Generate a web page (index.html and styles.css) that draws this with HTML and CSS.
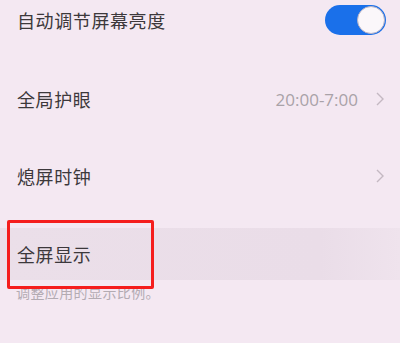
FILE: index.html
```html
<!DOCTYPE html>
<html lang="zh">
<head>
<meta charset="utf-8">
<link rel="stylesheet" href="styles.css">
</head>
<body>
<div class="page">
  <div class="row row-first">
    <span class="title">自动调节屏幕亮度</span>
    <span class="toggle"><span class="knob"></span></span>
  </div>
  <div class="row row-second">
    <span class="title">全局护眼</span>
    <span class="right">
      <span class="value">20:00-7:00</span>
      <svg class="chev" width="10" height="16" viewBox="0 0 10 16"><polyline points="2,2 8,8 2,14" fill="none" stroke="#c4b8c2" stroke-width="1.4"/></svg>
    </span>
  </div>
  <div class="row row-third">
    <span class="title">熄屏时钟</span>
    <span class="right">
      <svg class="chev" width="10" height="16" viewBox="0 0 10 16"><polyline points="2,2 8,8 2,14" fill="none" stroke="#c4b8c2" stroke-width="1.4"/></svg>
    </span>
  </div>
  <div class="row row-fourth">
    <span class="title">全屏显示</span>
  </div>
  <div class="sub">调整应用的显示比例。</div>
  <div class="mark"></div>
</div>
</body>
</html>
```
FILE: styles.css
```css
html, body {
  margin: 0;
  padding: 0;
  background: #f4e8f2;
}
.page {
  position: relative;
  width: 400px;
  height: 343px;
  overflow: hidden;
  font-family: "Noto Sans CJK SC", "Noto Sans", sans-serif;
}
.row {
  display: flex;
  align-items: center;
  justify-content: space-between;
  padding: 0 15px 0 17px;
  height: 52px;
}
.row-first {
  height: 40px;
  padding-right: 14px;
}
.row-second { margin-top: 33px; }
.row-third { margin-top: 25px; }
.row-fourth {
  margin-top: 26px;
  background: linear-gradient(to right, #ebdfe9 0%, #eadde8 80%, #efe3ed 100%);
}
.title {
  font-size: 18px;
  color: #3c383b;
  letter-spacing: 0.6px;
}
.right {
  display: flex;
  align-items: center;
  gap: 17px;
}
.value {
  font-family: "Open Sans", "Noto Sans", sans-serif;
  font-size: 17px;
  color: #a9a2a8;
}
.chev { display: block; }
.toggle {
  position: relative;
  width: 61px;
  height: 30px;
  border-radius: 15px;
  background: #1a70ea;
}
.knob {
  position: absolute;
  right: 1px;
  top: 1px;
  width: 26px;
  height: 26px;
  border-radius: 50%;
  background: #fbf7fa;
  border: 1px solid #b9b3c4;
}
.sub {
  padding-left: 16px;
  margin-top: 2px;
  font-size: 14px;
  color: #b3abb2;
  letter-spacing: 0.4px;
}
.mark {
  position: absolute;
  left: 7px;
  top: 220px;
  width: 141px;
  height: 63px;
  border: 3px solid #f51d1d;
  border-radius: 2px;
}
```
